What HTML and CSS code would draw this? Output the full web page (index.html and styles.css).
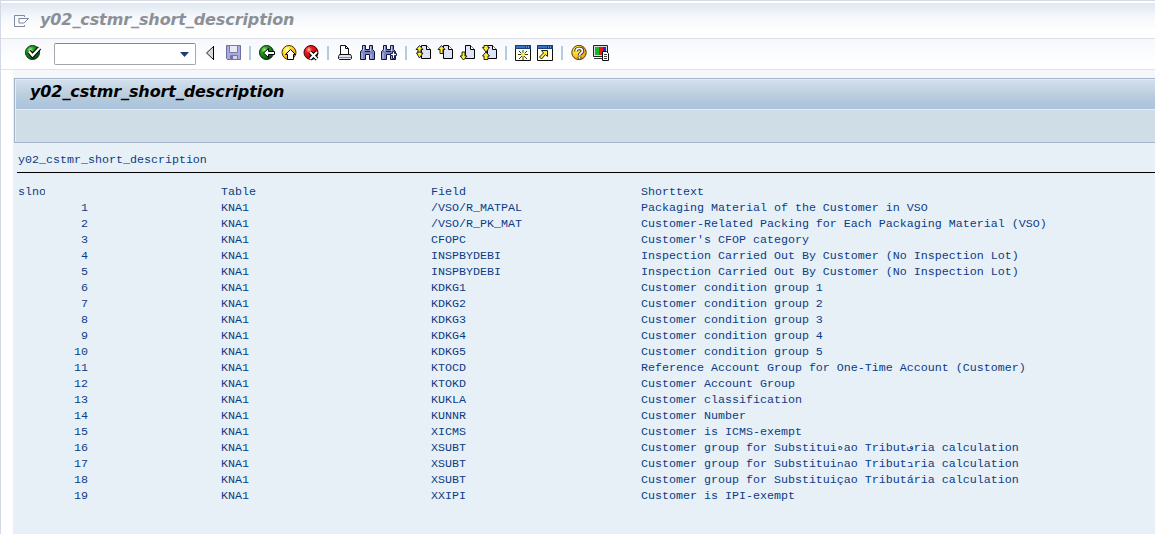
FILE: index.html
```
<!DOCTYPE html>
<html lang="en">
<head>
<meta charset="utf-8">
<title>y02_cstmr_short_description</title>
<link rel="stylesheet" href="styles.css">
</head>
<body>
<svg class="defs" width="0" height="0">
  <defs>
    <radialGradient id="green" cx=".35" cy=".3" r=".75"><stop offset="0" stop-color="#a4f08a"/><stop offset=".3" stop-color="#27a51d"/><stop offset=".75" stop-color="#087010"/><stop offset="1" stop-color="#033c10"/></radialGradient>
    <radialGradient id="yellow" cx=".35" cy=".3" r=".75"><stop offset="0" stop-color="#ffffc8"/><stop offset=".3" stop-color="#ffe733"/><stop offset="1" stop-color="#f09a05"/></radialGradient>
    <radialGradient id="red" cx=".35" cy=".3" r=".75"><stop offset="0" stop-color="#ffc0b0"/><stop offset=".3" stop-color="#ee1c18"/><stop offset="1" stop-color="#a80008"/></radialGradient>
    <g id="page"><path d="M6.500.5h5l4 4v9h-9z" fill="#dfe3f7" stroke="#000"/><path d="M11.500.5v4h4" fill="#fff" stroke="#000"/></g>
    <g id="binoculars"><path d="M2.500.5h3v4h4v-4h3v4l2 2v8h-5v-5h-4v5h-5v-8l2-2z" fill="#7b84c4" stroke="#111633"/><path d="M3.500 1v5M2 8v6M10.500 1v5M11 9v5" stroke="#c5caf0"/><path d="M5 6.500h5" stroke="#111633"/></g>
    <g id="window"><path d="M.5.5h15v15H.5z" fill="#fffff0" stroke="#111"/><path d="M0 0h16v4H0z" fill="#173f82"/><path d="M1 1h9v2H1z" fill="#2f72c8"/><path d="M11 2h1M13 2h1" stroke="#dce8ff"/></g>
  </defs>
</svg>
<div class="window">
  <header class="titlebar">
    <svg class="menu-icon" width="16" height="13" viewBox="0 0 16 13"><path d="M10.500 2V.5H.5v11h10V10" fill="none" stroke="#7c899e"/><path d="M5 3.500h9.500L10 8H5M5 3v5" fill="#fff" stroke="#7c899e"/></svg>
    <span class="heading heading-muted">y02_cstmr_short_description</span>
  </header>
  <nav class="toolbar">
    <svg class="icon enter" viewBox="0 0 17 17"><circle cx="7.500" cy="7.500" r="7" fill="url(#green)" stroke="#092b12"/><path d="M4 6.500l3.500 4L14.500 3" fill="none" stroke="#000" stroke-width="4.500"/><path d="M4 6.500l3.500 4L14.500 3" fill="none" stroke="#fff" stroke-width="2.300"/></svg>
    <div class="command"><svg width="9" height="5" viewBox="0 0 9 5"><path d="M0 0h9L4.500 5z" fill="#1d3c70"/></svg></div>
    <div class="group">
      <svg class="icon" viewBox="0 0 17 17"><path d="M10.500 1.500v13L3.500 8z" fill="#d8d8d8" stroke="#222"/><path d="M10.500 1v14" stroke="#000"/></svg>
      <svg class="icon" viewBox="-1 0 17 17"><path d="M.5.5h14v14h-13l-1-1z" fill="#a9aadb" stroke="#6d6ba0"/><path d="M3.500.5h8v7h-8z" fill="#e8e9f4" stroke="#7c7aad"/><path d="M4.500 10.500h7v4h-7z" fill="#d4d4e6" stroke="#77759f"/><path d="M5 11h2v3H5z" fill="#7270a6"/></svg>
    </div>
    <i class="sep"></i>
    <div class="group">
      <svg class="icon" viewBox="0 0 17 17"><circle cx="7.500" cy="7.500" r="7" fill="url(#green)" stroke="#092b12"/><path d="M4.500 8L9.500 3.500v3h6v3h-6v3z" fill="#fff" stroke="#000"/></svg>
      <svg class="icon" viewBox="0 0 17 17"><circle cx="8" cy="7.500" r="7" fill="url(#yellow)" stroke="#54310a"/><path d="M9.500 4.500l5 5h-2v5h-6v-5h-2z" fill="#fff" stroke="#000"/></svg>
      <svg class="icon" viewBox="0 0 17 17"><circle cx="8" cy="7.500" r="7" fill="url(#red)" stroke="#4a0509"/><path d="M7 7l7 7M14 7l-7 7" stroke="#000" stroke-width="4"/><path d="M7 7l7 7M14 7l-7 7" stroke="#fff" stroke-width="2"/></svg>
    </div>
    <i class="sep"></i>
    <div class="group">
      <svg class="icon" viewBox="0 0 17 17"><path d="M3.500.5h5l3 3v6h-8z" fill="#fff" stroke="#111"/><path d="M8.500.5v3h3" fill="none" stroke="#111"/><path d="M2.500 9.500h11l1 2v2l-1 1h-11l-1-1v-2z" fill="#dfe2ef" stroke="#111"/><path d="M2 12.500h12" stroke="#8087bb"/></svg>
      <svg class="icon" viewBox="0 0 17 17"><use href="#binoculars" x="1"/></svg>
      <svg class="icon" viewBox="0 0 17 17"><use href="#binoculars"/><path d="M11.500 6.500h2v2h2v2h-2v3h-2v-3h-2v-2h2z" fill="#fff" stroke="#1b2152"/></svg>
    </div>
    <i class="sep"></i>
    <div class="group">
      <svg class="icon" viewBox="0 0 17 17"><use href="#page"/><path d="M4.500.5L8 4.500H6V8h2l-3.500 5L1.500 8H3V4.500H1z" fill="#ffed2b" stroke="#222"/><path d="M2 7h5" stroke="#222"/></svg>
      <svg class="icon" viewBox="0 0 17 17"><use href="#page"/><path d="M4.500.5L8 4.500H6v4H3v-4H1z" fill="#ffed2b" stroke="#222"/></svg>
      <svg class="icon" viewBox="0 0 17 17"><use href="#page"/><path d="M4.500 15L8 11H6V7H3v4H1z" fill="#ffed2b" stroke="#222"/></svg>
      <svg class="icon" viewBox="0 0 17 17"><use href="#page"/><path d="M3 .5h4v2h1.500L5 7 1.500 2.500H3z" fill="#ffed2b" stroke="#222"/><path d="M5 7l3.500 4H7v3.500H3V11H1.500z" fill="#ffed2b" stroke="#222"/></svg>
    </div>
    <i class="sep"></i>
    <div class="group">
      <svg class="icon" viewBox="0 0 17 17"><use href="#window"/><path d="M8 5v10M3 9.500h10M4 6l8 8M12 6l-8 8" stroke="#38371c"/><circle cx="8" cy="9.500" r="2" fill="#ffee38"/></svg>
      <svg class="icon" viewBox="0 0 17 17"><use href="#window"/><path d="M4.500 5.500h6v6l-2-2-4 4.500-2-2L6.500 8z" fill="#ffed2b" stroke="#222"/></svg>
    </div>
    <i class="sep"></i>
    <div class="group">
      <svg class="icon" viewBox="0 0 17 17"><circle cx="8" cy="7.500" r="7.200" fill="url(#yellow)" stroke="#5a3909"/><path d="M5 6.500C5 2.500 11.500 2.500 11.500 6c0 2-3 2.200-3 4.200M8.500 11.800v2" fill="none" stroke="#222" stroke-width="3.600"/><path d="M5 6.500C5 2.500 11.500 2.500 11.500 6c0 2-3 2.200-3 4.200M8.500 11.800v2" fill="none" stroke="#fff" stroke-width="1.800"/></svg>
      <svg class="icon" viewBox="0 0 17 17"><path d="M.5.5h14v11H.5z" fill="#ddd" stroke="#222"/><path d="M2 2h4v8H2z" fill="#13b829"/><path d="M6 2h4v8H6z" fill="#e61717"/><path d="M10 2h3v8h-3z" fill="#242ec8"/><path d="M1 13.500h8" stroke="#333"/><path d="M9.500 6.500h4l2 2v7h-6z" fill="#fff" stroke="#111"/><path d="M11 9.500h3M11 11.500h3M11 13.500h3" stroke="#444"/></svg>
    </div>
  </nav>
  <main class="content">
    <section class="banner">
      <div class="banner-title"><span class="heading">y02_cstmr_short_description</span></div>
      <div class="banner-bar"></div>
    </section>
    <div class="list">
      <p class="list-title">y02_cstmr_short_description</p>
      <div class="row head"><span class="clip">slno</span><span>Table</span><span>Field</span><span>Shorttext</span></div>
      <div class="row"><span>1</span><span>KNA1</span><span>/VSO/R_MATPAL</span><span>Packaging Material of the Customer in VSO</span></div>
      <div class="row"><span>2</span><span>KNA1</span><span>/VSO/R_PK_MAT</span><span>Customer-Related Packing for Each Packaging Material (VSO)</span></div>
      <div class="row"><span>3</span><span>KNA1</span><span>CFOPC</span><span>Customer's CFOP category</span></div>
      <div class="row"><span>4</span><span>KNA1</span><span>INSPBYDEBI</span><span>Inspection Carried Out By Customer (No Inspection Lot)</span></div>
      <div class="row"><span>5</span><span>KNA1</span><span>INSPBYDEBI</span><span>Inspection Carried Out By Customer (No Inspection Lot)</span></div>
      <div class="row"><span>6</span><span>KNA1</span><span>KDKG1</span><span>Customer condition group 1</span></div>
      <div class="row"><span>7</span><span>KNA1</span><span>KDKG2</span><span>Customer condition group 2</span></div>
      <div class="row"><span>8</span><span>KNA1</span><span>KDKG3</span><span>Customer condition group 3</span></div>
      <div class="row"><span>9</span><span>KNA1</span><span>KDKG4</span><span>Customer condition group 4</span></div>
      <div class="row"><span>10</span><span>KNA1</span><span>KDKG5</span><span>Customer condition group 5</span></div>
      <div class="row"><span>11</span><span>KNA1</span><span>KTOCD</span><span>Reference Account Group for One-Time Account (Customer)</span></div>
      <div class="row"><span>12</span><span>KNA1</span><span>KTOKD</span><span>Customer Account Group</span></div>
      <div class="row"><span>13</span><span>KNA1</span><span>KUKLA</span><span>Customer classification</span></div>
      <div class="row"><span>14</span><span>KNA1</span><span>KUNNR</span><span>Customer Number</span></div>
      <div class="row"><span>15</span><span>KNA1</span><span>XICMS</span><span>Customer is ICMS-exempt</span></div>
      <div class="row"><span>16</span><span>KNA1</span><span>XSUBT</span><span>Customer group for Substitui<b class="cell arabic">ه</b>ao Tribut<b class="cell arabic">ف</b>ria calculation</span></div>
      <div class="row"><span>17</span><span>KNA1</span><span>XSUBT</span><span>Customer group for Substitui<b class="cell hebrew">ח</b>ao Tribut<b class="cell hebrew">ב</b>ria calculation</span></div>
      <div class="row"><span>18</span><span>KNA1</span><span>XSUBT</span><span>Customer group for Substituiçao Tributária calculation</span></div>
      <div class="row"><span>19</span><span>KNA1</span><span>XXIPI</span><span>Customer is IPI-exempt</span></div>
    </div>
  </main>
</div>
</body>
</html>
```
FILE: styles.css
```
* { box-sizing: border-box; }
body { margin: 0; background: #fff; overflow: hidden; }
.defs { display: block; }
.window {
  display: flex; flex-direction: column;
  height: 534px;
  border-left: 1px solid #d3d9e5;
  border-top: 1px solid #d3dae5;
}
.titlebar {
  display: flex; align-items: center; flex: none;
  height: 38px; padding: 0 0 0 13px;
  border-top: 2px solid #fff;
  border-bottom: 1px solid #dde2e8;
  background: linear-gradient(#dfe7f1, #f5f8fb 40%, #fff 80%);
}
.menu-icon { margin-top: 1px; }
.heading {
  font: italic bold 16px/20px "DejaVu Sans", Tahoma, sans-serif;
  letter-spacing: -.1px;
  white-space: nowrap;
  color: #000;
}
.heading-muted { color: #8b9097; margin: -2px 0 0 10px; }
.toolbar {
  display: flex; align-items: flex-start; flex: none;
  height: 31px; padding: 6px 0 0 24px;
  border-bottom: 1px solid #e0e3e8;
  background: linear-gradient(#f6f8fc, #fff 80%);
}
.icon { display: block; width: 17px; height: 17px; flex: none; }
.command {
  display: flex; align-items: center; justify-content: flex-end;
  width: 142px; height: 22px; margin: -2px 7px 0 12px; padding-right: 6px;
  border: 1px solid #a3a6aa; border-top-color: #85898e; border-radius: 2px;
  background: #fff;
}
.group { display: flex; gap: 5px; }
.sep { width: 2px; height: 14px; margin: 1px 8px 0 7px; background: #b5cbdf; }
.content {
  flex: 1; margin-left: 12px;
  border-top: 8px solid #f5f7fb;
  background: #e8f0f7;
}
.banner {
  height: 65px; margin-left: 1px;
  border: 1px solid #a3b5c8; border-right: 0;
  background: #cfdde7;
}
.banner-title {
  display: flex; height: 31px; padding: 2px 0 0 14px;
  border-top: 1px solid #e3edf5; border-left: 1px solid #e3edf5;
  border-bottom: 1px solid #e3edf5;
  background: linear-gradient(#d2e0ed, #baccdc 55%, #adc7de 80%, #adc3db);
}
.banner-bar { height: 32px; border-left: 1px solid #e3edf5; }
.list {
  padding: 8px 0 0 4px;
  font: 11.66px/16px "Liberation Mono", monospace;
  color: #0a3c85; white-space: nowrap;
}
.list-title { margin: 0; padding: 1px 0 0 1px; height: 22px; border-bottom: 1px solid #000; }
.row { display: grid; grid-template-columns: 70px 343px 210px 1fr; height: 16px; padding-left: 1px; }
.row > :first-child { text-align: right; }
.row > :nth-child(2) { margin-left: 133px; }
.head { margin-top: 11px; }
.head > .clip { text-align: left; width: 27px; overflow: hidden; }
.cell { display: inline-block; width: 7px; height: 16px; vertical-align: top; font-weight: normal; text-align: center; }
.arabic { font: 10px/14px "DejaVu Sans Mono", monospace; }
.hebrew { font: 10px/16px "DejaVu Sans", sans-serif; }
```
